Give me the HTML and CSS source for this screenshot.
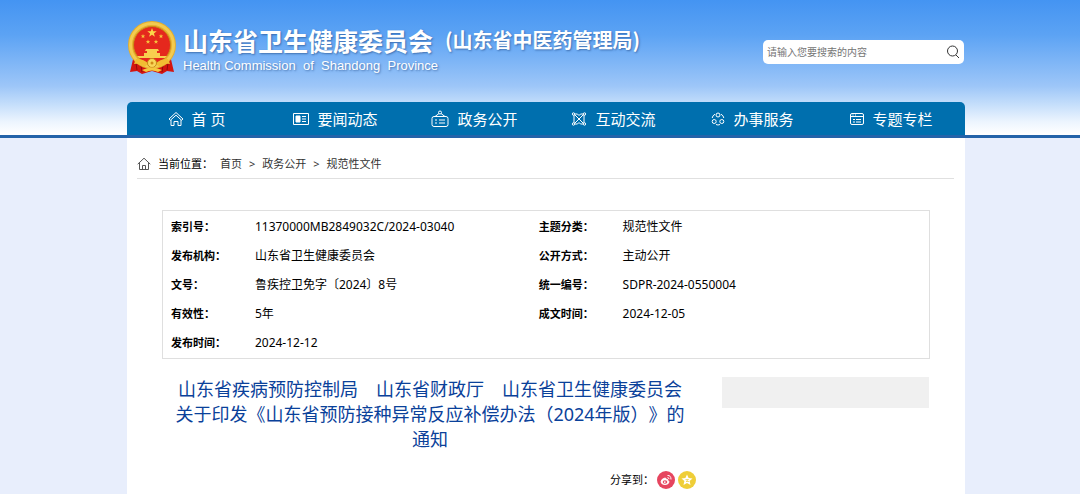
FILE: index.html
```html
<!DOCTYPE html>
<html lang="zh-CN">
<head>
    <meta charset="UTF-8">
    <meta name="viewport" content="width=device-width, initial-scale=1.0">
    <title>山东省卫生健康委员会</title>
    <link rel="stylesheet" href="styles.css">
</head>
<body>
    <header class="header">
        <div class="wrap">
            <div class="top">
                <a class="brand" href="#">
                    <svg class="emblem" viewBox="0 0 48 54" aria-hidden="true">
                        <path d="M6 34 L2 51 L9 50 L14 53 L24 50 L34 53 L39 50 L46 51 L42 34z" fill="#d3140f"/>
                        <path d="M8 42l1 7M13 44l1 7M35 44l-1 7M40 42l-1 7" stroke="#8f0c0c" fill="none"/>
                        <circle cx="24" cy="24" r="24" fill="#e6ae2c"/>
                        <circle cx="24" cy="24" r="21.500" fill="none" stroke="#f3cb50" stroke-width="3"/>
                        <circle cx="24" cy="24" r="18.500" fill="#e5281d" stroke="#c98a17"/>
                        <path d="M24 7l1.200 3.200 3.500.1-2.800 2.100 1 3.400L24 13.800l-2.900 2 1-3.400-2.800-2.100 3.500-.1z" fill="#fbd64a"/>
                        <path d="M15 13l.6 1.500 1.600.1-1.200 1 .4 1.600-1.400-.9-1.400.9.4-1.600-1.200-1 1.600-.1zM33 13l.6 1.500 1.600.1-1.200 1 .4 1.600-1.400-.9-1.400.9.4-1.600-1.200-1 1.600-.1zM20 18.500l.6 1.500 1.600.1-1.200 1 .4 1.600-1.400-.9-1.400.9.4-1.600-1.200-1 1.600-.1zM28 18.500l.6 1.500 1.600.1-1.200 1 .4 1.600-1.400-.9-1.400.9.4-1.600-1.200-1 1.600-.1z" fill="#f6c23c"/>
                        <path d="M18 28h12l1 2H17zM19 30h10v2H19zM16 32h16v3H16zM9 35h30l-2 2H11z" fill="#f8cf4e"/>
                        <path d="M8 38q9 0 12 5l-4 3q-4-4-10-3zM40 38q-9 0-12 5l4 3q4-4 10-3z" fill="#f2bd32"/>
                        <circle cx="24" cy="42" r="4.500" fill="#f9d65a" stroke="#c98a17"/>
                        <circle cx="24" cy="42" r="1.500" fill="#d08c18"/>
                        <path d="M14 49q10-5 20 0l-4 2q-6-3-12 0z" fill="#f5c83f"/>
                    </svg>
                    <span class="brand-text">
                        <span class="brand-cn">
                            <strong class="brand-name">山东省卫生健康委员会</strong>
                            <strong class="brand-sub">(山东省中医药管理局)</strong>
                        </span>
                        <span class="brand-en">Health Commission&nbsp; of&nbsp; Shandong&nbsp; Province</span>
                    </span>
                </a>
                <form class="search" action="#">
                    <input class="search-input" type="text" placeholder="请输入您要搜索的内容" aria-label="请输入您要搜索的内容">
                    <button class="search-btn" type="submit" aria-label="搜索">
                        <svg width="14" height="14" viewBox="0 0 14 14" fill="none" stroke="#333"><circle cx="6.500" cy="6" r="5"/><path d="M10 10l3 3"/></svg>
                    </button>
                </form>
            </div>
            <nav class="nav">
                <a href="#">
                    <svg width="16" height="16" viewBox="0 0 16 16"><path d="M1 8l7-6.500L15 8l-1.500 1.200L8 4.200 2.500 9.200zM3 9v5.500h3v-4h4v4h3V9"/></svg>
                    首 页
                </a>
                <a href="#">
                    <svg width="16" height="16" viewBox="0 0 16 16"><path d="M.5 2.500h15v11H.5zM9 5.500h4M9 8h4M9 10.500h4"/><path class="solid" d="M3 5h4v6H3z"/></svg>
                    要闻动态
                </a>
                <a href="#">
                    <svg width="18" height="18" viewBox="0 0 18 18"><rect x="1" y="6.500" width="16" height="10" rx="2"/><path d="M4 6.500l4-3M14 6.500l-4-3M4 10h2M8 10h6M4 13h2M8 13h6"/><circle cx="9" cy="2.500" r="1.500"/></svg>
                    政务公开
                </a>
                <a href="#">
                    <svg width="16" height="16" viewBox="0 0 16 16"><path d="M3 4v8M13 4v8M4 3h2.500L8 4.500 9.500 3H12M4 13h2.500L8 11.500 9.500 13H12M3.500 3.500l9 9M12.500 3.500l-9 9"/><circle cx="2.500" cy="3" r="1.200"/><circle cx="13.500" cy="3" r="1.200"/><circle cx="2.500" cy="13" r="1.200"/><circle cx="13.500" cy="13" r="1.200"/></svg>
                    互动交流
                </a>
                <a href="#">
                    <svg width="14" height="14" viewBox="0 0 14 14"><circle cx="7" cy="3" r="2"/><circle cx="3.200" cy="9.500" r="2"/><circle cx="10.800" cy="9.500" r="2"/><path d="M4 2.200Q1.500 3.500 1.200 6M10 2.200q2.500 1.300 2.800 3.800M5 12.500q2 1 4 0"/></svg>
                    办事服务
                </a>
                <a href="#">
                    <svg width="14" height="14" viewBox="0 0 14 14"><rect x=".5" y="1.500" width="13" height="11" rx="1.500"/><path d="M.5 4.500h13M3 7.500h2M6 7.500h5M3 10h2M6 10h5M2.500 3h1M5 3h1"/></svg>
                    专题专栏
                </a>
            </nav>
        </div>
    </header>

    <main class="wrap main">
        <div class="crumbs">
            <svg width="14" height="14" viewBox="0 0 14 14" fill="none" stroke="#555"><path d="M.7 7.200L7 1.200l6.300 6M2.500 6v6.500h9V6M5.500 12.500V8.500h3v4" stroke-linejoin="round"/></svg>
            <span class="crumbs-label">当前位置：</span>
            <a href="#">首页</a>
            <span>&gt;</span>
            <a href="#">政务公开</a>
            <span>&gt;</span>
            <a href="#">规范性文件</a>
        </div>

        <div class="content">
            <div class="info">
                <table>
                    <tr>
                        <th scope="row">索引号：</th><td>11370000MB2849032C/2024-03040</td>
                        <th scope="row">主题分类：</th><td>规范性文件</td>
                    </tr>
                    <tr>
                        <th scope="row">发布机构：</th><td>山东省卫生健康委员会</td>
                        <th scope="row">公开方式：</th><td>主动公开</td>
                    </tr>
                    <tr>
                        <th scope="row">文号：</th><td>鲁疾控卫免字〔2024〕8号</td>
                        <th scope="row">统一编号：</th><td>SDPR-2024-0550004</td>
                    </tr>
                    <tr>
                        <th scope="row">有效性：</th><td>5年</td>
                        <th scope="row">成文时间：</th><td>2024-12-05</td>
                    </tr>
                    <tr>
                        <th scope="row">发布时间：</th><td>2024-12-12</td>
                        <td></td><td></td>
                    </tr>
                </table>
            </div>

            <div class="columns">
                <article class="article">
                    <h1>山东省疾病预防控制局　山东省财政厅　山东省卫生健康委员会<br>关于印发《山东省预防接种异常反应补偿办法（2024年版）》的<br>通知</h1>
                    <div class="share">
                        <span>分享到：</span>
                        <a class="share-weibo" href="#" aria-label="微博">
                            <svg width="12" height="12" viewBox="0 0 12 12" fill="none" stroke="#fff"><path d="M5 4Q1 5 1 8q.5 2.500 4 2.500T9 8q0-1-1.200-1.500Q8 4.800 6 5.300 6 4 5 4z" fill="#fff"/><ellipse cx="5" cy="8" rx="2.300" ry="1.700" fill="#e6455f" stroke="none"/><circle cx="4.800" cy="8.100" r=".9" fill="#fff" stroke="none"/><path d="M7.500 1.500q3.500-.3 3.500 4M7.500 3.500Q9 3.500 9 5.200"/></svg>
                        </a>
                        <a class="share-qzone" href="#" aria-label="QQ空间">
                            <svg width="12" height="12" viewBox="0 0 12 12"><path d="M6 .5l1.600 3.500 3.900.4-2.900 2.600.9 4L6 9l-3.500 2 .9-4L.5 4.400 4.400 4z" fill="#fff"/><path d="M4.500 5.500h3L5 7.500h3" fill="none" stroke="#efce38" stroke-width=".7"/></svg>
                        </a>
                    </div>
                </article>
                <aside class="side"></aside>
            </div>
        </div>
    </main>
</body>
</html>
```
FILE: styles.css
```css
* {
    box-sizing: border-box;
}

body {
    margin: 0;
    min-height: 100vh;
    display: flex;
    flex-direction: column;
    background: #e8eefc;
    color: #000;
    font-family: "Noto Sans", "Noto Sans CJK SC", sans-serif;
    font-size: 11px;
    line-height: 20px;
    text-spacing-trim: space-all;
}

a {
    color: inherit;
    text-decoration: none;
}

.wrap {
    margin: 0 115px 0 127px;
}

/* header */
.header {
    background: linear-gradient(#4494f2 0, #5ca3f4 35px, #9dc6f8 86px, #c6dffb 105px, #edf5fe 122px, #fff 134px);
    border-bottom: 3px solid #2463a9;
}

.top {
    display: flex;
    justify-content: space-between;
    align-items: flex-start;
    height: 102px;
    padding-top: 21px;
}

.brand {
    display: flex;
    gap: 7px;
    padding-left: 1px;
    color: #fff;
    white-space: nowrap;
}

.emblem {
    width: 48px;
    height: 54px;
}

.brand-text {
    display: flex;
    flex-direction: column;
    text-shadow: 1px 1px 2px rgba(30, 70, 130, 0.6);
}

.brand-cn {
    display: flex;
    align-items: center;
    gap: 12px;
    height: 38px;
    font-family: "Noto Sans CJK SC", sans-serif;
}

.brand-name {
    font-size: 25px;
}

.brand-sub {
    font-size: 20px;
}

.brand-en {
    font-family: "Liberation Sans", Arial, sans-serif;
    font-size: 13px;
    line-height: 14px;
}

.search {
    display: flex;
    align-items: center;
    width: 201px;
    height: 24px;
    margin: 19px 1px 0 0;
    background: #fff;
    border-radius: 5px;
}

.search-input {
    flex: 1;
    min-width: 0;
    padding: 0 4px;
    border: none;
    outline: none;
    background: none;
    font-family: inherit;
    font-size: 10px;
}

.search-input::placeholder {
    color: #757575;
}

.search-btn {
    display: flex;
    padding: 0 4px;
    border: none;
    background: none;
    cursor: pointer;
}

.nav {
    display: flex;
    height: 33px;
    padding-right: 4px;
    background: #006fae;
    border-radius: 5px 5px 0 0;
    color: #fff;
    font-size: 15px;
}

.nav a {
    flex: 1;
    display: flex;
    justify-content: center;
    align-items: center;
    gap: 8px;
    white-space: nowrap;
}

.nav svg {
    fill: none;
    stroke: #fff;
}

.nav .solid {
    fill: #fff;
}

/* page body */
.main {
    flex: 1;
    padding: 11px 11px 0 10px;
    background: #fff;
}

.crumbs {
    display: flex;
    align-items: center;
    gap: 7px;
    height: 30px;
    border-bottom: 1px solid #e0e0e0;
    color: #333;
}

.crumbs-label {
    color: #000;
}

.content {
    padding: 31px 24px 0 25px;
}

.info {
    padding: 1px 0;
    border: 1px solid #dfdfdf;
}

.info table {
    width: 100%;
    table-layout: fixed;
    border-collapse: collapse;
}

.info th,
.info td {
    height: 29px;
    padding: 0;
    text-align: left;
}

.info th {
    width: 12%;
    padding-left: 8px;
}

.info td {
    font-size: 12px;
}

.info td:nth-child(2) {
    width: 36%;
}

.columns {
    display: flex;
    justify-content: space-between;
    gap: 24px;
    padding: 18px 1px 0 0;
}

.article {
    flex: 1;
}

.article h1 {
    margin: 0;
    color: #0a419a;
    font-size: 18px;
    font-weight: 400;
    line-height: 25px;
    text-align: center;
}

.share {
    display: flex;
    justify-content: flex-end;
    align-items: center;
    gap: 3px;
    padding: 18px 2px 2px 0;
}

.share a {
    display: flex;
    justify-content: center;
    align-items: center;
    width: 18px;
    height: 18px;
    border-radius: 50%;
}

.share-weibo {
    background: #e6455f;
}

.share-qzone {
    background: #efce38;
}

.side {
    width: 207px;
    height: 31px;
    background: #f0f0f0;
}
```
